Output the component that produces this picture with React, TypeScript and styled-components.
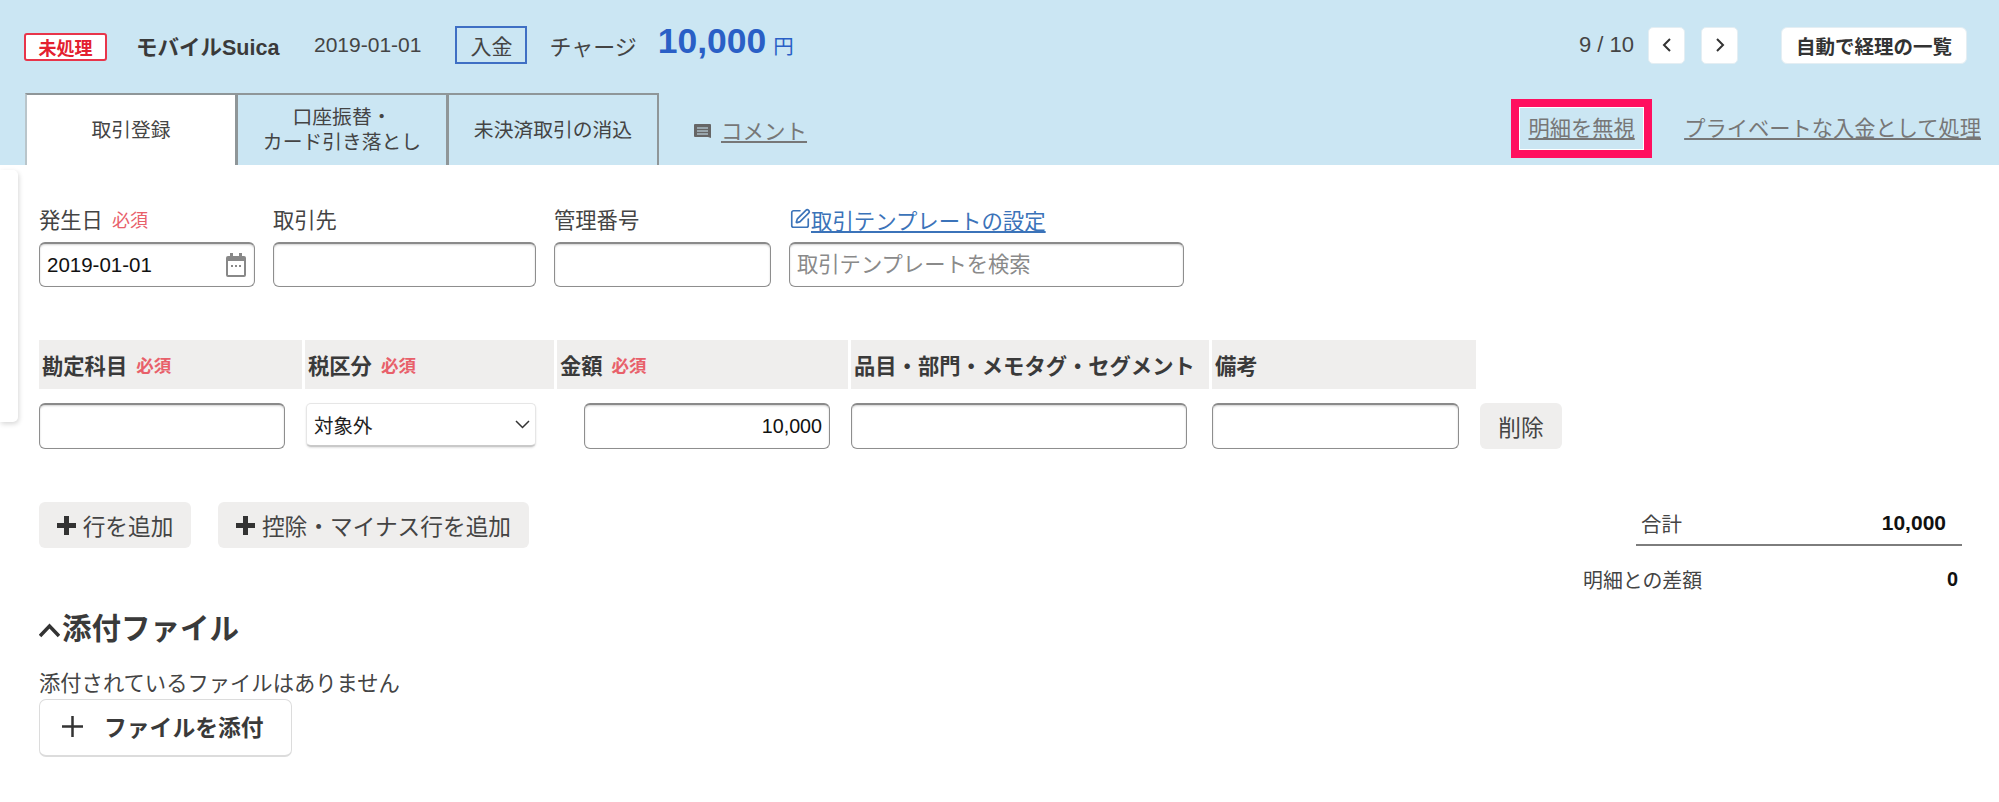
import styled, { createGlobalStyle } from "styled-components";
import { SquarePen } from "lucide-react";

const GlobalStyle = createGlobalStyle`
    html, body {
        margin: 0;
        padding: 0;
        background: #fff;
    }
    body {
        font-family: "Liberation Sans", "Noto Sans CJK JP", sans-serif;
        color: #444;
    }
    * {
        box-sizing: border-box;
    }
`;

const Page = styled.div`
    width: 1999px;
    height: 802px;
    overflow: hidden;
    position: relative;
`;

const Header = styled.header`
    height: 165px;
    background: #cbe6f3;
`;
const TopRow = styled.div`
    height: 93px;
    padding: 0 32px 3px 24px;
    display: flex;
    align-items: center;
`;
const StatusBadge = styled.span`
    width: 83px;
    height: 28px;
    margin-top: 3px;
    display: flex;
    align-items: center;
    justify-content: center;
    background: #fff;
    border: 2px solid #e8354a;
    border-radius: 3px;
    color: #e3202f;
    font-size: 18px;
    font-weight: 700;
`;
const WalletName = styled.span`
    margin-left: 29px;
    width: 142px;
    font-size: 21.5px;
    font-weight: 700;
    white-space: nowrap;
    color: #3a3a3a;
`;
const DateText = styled.span`
    margin-left: 36px;
    font-size: 21px;
    color: #444;
`;
const TypeBox = styled.span`
    margin-left: 34px;
    width: 72px;
    height: 38px;
    display: flex;
    align-items: center;
    justify-content: center;
    border: 2px solid #3f6fc4;
    font-size: 21px;
`;
const Description = styled.span`
    margin-left: 22px;
    font-size: 22px;
    white-space: nowrap;
`;
const Amount = styled.span`
    margin-left: 21px;
    margin-top: -8px;
    font-size: 35.5px;
    font-weight: 700;
    color: #2a5fc6;
    line-height: 38px;
`;
const Yen = styled.span`
    margin-left: 7px;
    font-size: 20.5px;
    color: #2a5fc6;
`;
const Pager = styled.div`
    margin-left: auto;
    display: flex;
    align-items: center;
`;
const PageCount = styled.span`
    font-size: 22px;
    margin-right: 14px;
`;
const PageButtons = styled.div`
    display: flex;
    gap: 16px;
`;
const PageButton = styled.button`
    width: 37px;
    height: 37px;
    padding: 0;
    display: flex;
    align-items: center;
    justify-content: center;
    background: #fff;
    border: 1px solid #e4eef3;
    border-radius: 5px;
`;
const ListButton = styled.button`
    margin-left: 43px;
    width: 186px;
    height: 37px;
    padding: 0;
    background: #fff;
    border: 1px solid #e4eef3;
    border-radius: 6px;
    font-family: inherit;
    font-size: 19.5px;
    font-weight: 700;
    color: #333;
`;

const TabRow = styled.div`
    height: 72px;
    padding: 0 18px 0 25px;
    display: flex;
    align-items: stretch;
`;
const Tab = styled.div<{ $active?: boolean }>`
    width: 212px;
    margin-right: -1px;
    display: flex;
    align-items: center;
    justify-content: center;
    text-align: center;
    font-size: 19.8px;
    line-height: 25px;
    border: 2px solid #8f9698;
    border-bottom: none;
    background: ${props => (props.$active ? "#fff" : "transparent")};
    border-left-color: ${props => (props.$active ? "#b9c5ca" : "#8f9698")};
`;
const CommentLink = styled.a`
    margin-left: 36px;
    margin-top: 20px;
    height: 32px;
    display: flex;
    align-items: center;
    gap: 10px;
    font-size: 21.5px;
    color: #777;
    span {
        text-decoration: underline;
    }
    svg {
        margin-top: 4px;
    }
`;
const TabActions = styled.div`
    margin-left: auto;
    display: flex;
    align-items: flex-start;
`;
const ActionLink = styled.a`
    margin-top: 18px;
    font-size: 21.25px;
    color: #777;
    text-decoration: underline;
    white-space: nowrap;
`;
const IgnoreLink = styled(ActionLink)`
    margin-top: 6px;
    margin-right: 32px;
    width: 141px;
    height: 59px;
    padding-bottom: 5px;
    display: flex;
    align-items: center;
    justify-content: center;
    border: 8px solid #ff0f5f;
    outline: 1px solid #fff;
    outline-offset: -9px;
`;

const DrawerEdge = styled.div`
    position: absolute;
    left: 0;
    top: 170px;
    width: 18px;
    height: 252px;
    background: #fff;
    border-radius: 0 5px 5px 0;
    box-shadow: 1px 2px 5px rgba(0, 0, 0, 0.16);
`;

const Body = styled.main`
    padding: 42px 37px 0 39px;
`;
const FormRow = styled.div`
    display: flex;
    gap: 18px;
`;
const Field = styled.div<{ $width: number }>`
    width: ${props => props.$width}px;
    display: flex;
    flex-direction: column;
    gap: 9px;
`;
const Label = styled.label`
    height: 26px;
    padding-bottom: 3px;
    display: flex;
    align-items: center;
    font-size: 21.3px;
    white-space: nowrap;
`;
const Required = styled.span`
    margin-left: 9px;
    font-size: 18px;
    color: #e8606a;
`;
const TemplateLink = styled.a`
    height: 26px;
    padding-bottom: 2px;
    display: flex;
    align-items: center;
    font-size: 21.4px;
    color: #3b73b9;
    text-decoration: underline;
    white-space: nowrap;
`;
const InputWrap = styled.div<{ $width?: number; $offset?: number }>`
    position: relative;
    width: ${props => (props.$width ? `${props.$width}px` : "100%")};
    margin-left: ${props => props.$offset || 0}px;
    height: 45px;
`;
const TextInput = styled.input`
    display: block;
    width: 100%;
    height: 100%;
    padding: 0 7px;
    background: #fff;
    border: 1px solid #8e8e8e;
    border-top: 2px solid #8a8a8a;
    border-radius: 6px;
    box-shadow: inset 0 1px 2px rgba(0, 0, 0, 0.18);
    font-family: inherit;
    font-size: 20.5px;
    color: #111;
    &::placeholder {
        color: #8a8a8a;
    }
`;
const SearchInput = styled(TextInput)`
    font-size: 21.3px;
`;
const AmountInput = styled(TextInput)`
    font-size: 19.7px;
    text-align: right;
`;
const CalendarIcon = styled.svg`
    position: absolute;
    right: 9px;
    top: 11px;
`;

const TableHead = styled.div`
    margin-top: 53px;
    display: grid;
    grid-template-columns: 263px 249px 291px 358px 264px;
    column-gap: 3px;
`;
const HeadCell = styled.div`
    height: 49px;
    padding: 0 0 1px 3px;
    display: flex;
    align-items: center;
    background: #efeeed;
    font-size: 21.3px;
    font-weight: 700;
    white-space: nowrap;
    color: #3a3a3a;
`;
const HeadRequired = styled(Required)`
    font-weight: 700;
    font-size: 17.5px;
`;
const TableRow = styled.div`
    margin-top: 14px;
    display: grid;
    grid-template-columns: 263px 249px 291px 358px 264px 82px;
    column-gap: 3px;
    ${InputWrap} {
        height: 46px;
    }
`;
const SelectBox = styled.div`
    width: 230px;
    height: 44px;
    margin-left: 1px;
    padding: 0 5px 0 7px;
    display: flex;
    align-items: center;
    justify-content: space-between;
    background: #fff;
    border: 1px solid #e6e6e6;
    border-bottom: 2px solid #c9c9c9;
    border-radius: 5px;
    box-shadow: 0 1px 2px rgba(0, 0, 0, 0.12);
    font-size: 19.5px;
    color: #222;
`;
const GrayButton = styled.button`
    display: flex;
    align-items: center;
    justify-content: center;
    height: 46px;
    padding: 0;
    background: #efeeed;
    border: none;
    border-radius: 6px;
    font-family: inherit;
    font-size: 22.7px;
    color: #444;
    white-space: nowrap;
`;
const DeleteButton = styled(GrayButton)`
    width: 82px;
    margin-left: 1px;
`;
const AddButton = styled(GrayButton)<{ $width: number }>`
    width: ${props => props.$width}px;
    gap: 7px;
`;
const ActionRow = styled.div`
    margin-top: 53px;
    display: flex;
    justify-content: space-between;
    align-items: flex-start;
`;
const AddButtons = styled.div`
    display: flex;
    gap: 27px;
`;
const Totals = styled.div`
    width: 379px;
    height: 93px;
    display: flex;
    flex-direction: column;
`;
const SumRow = styled.div`
    margin-left: 53px;
    height: 44px;
    padding: 0 16px 0 5px;
    display: flex;
    align-items: center;
    justify-content: space-between;
    border-bottom: 2px solid #7d7d7d;
    font-size: 20.5px;
`;
const SumValue = styled.b`
    font-size: 21px;
    color: #111;
`;
const DiffRow = styled.div`
    margin-top: 19px;
    padding-right: 4px;
    display: flex;
    align-items: center;
    justify-content: space-between;
    font-size: 19.9px;
`;
const DiffValue = styled.b`
    color: #111;
`;

const SectionTitle = styled.h2`
    margin: 11px 0 0;
    height: 40px;
    display: flex;
    align-items: center;
    gap: 2px;
    font-size: 29.5px;
    font-weight: 700;
    color: #3a3a3a;
    svg {
        margin-top: 9px;
    }
`;
const NoFileText = styled.p`
    margin: 23px 0 0;
    height: 30px;
    line-height: 31px;
    font-size: 21.3px;
`;
const AttachButton = styled.button`
    width: 253px;
    height: 58px;
    padding: 0 0 2px 22px;
    display: flex;
    align-items: center;
    gap: 21px;
    background: #fff;
    border: 1px solid #dcdcdc;
    border-bottom-width: 2px;
    border-radius: 7px;
    font-family: inherit;
    font-size: 22.8px;
    font-weight: 700;
    color: #3a3a3a;
`;

function PlusMark({ size, weight }: { size: number; weight: number }) {
    const mid = size / 2;
    return (
        <svg width={size} height={size} viewBox={`0 0 ${size} ${size}`}>
            <path d={`M${mid} 0V${size}M0 ${mid}H${size}`} stroke="#333" strokeWidth={weight} />
        </svg>
    );
}

function App() {
    return (
        <Page>
            <GlobalStyle />
            <Header>
                <TopRow>
                    <StatusBadge>未処理</StatusBadge>
                    <WalletName>モバイルSuica</WalletName>
                    <DateText>2019-01-01</DateText>
                    <TypeBox>入金</TypeBox>
                    <Description>チャージ</Description>
                    <Amount>10,000</Amount>
                    <Yen>円</Yen>
                    <Pager>
                        <PageCount>9 / 10</PageCount>
                        <PageButtons>
                            <PageButton>
                                <svg width="10" height="14" viewBox="0 0 10 14">
                                    <path d="M8 1L2 7l6 6" fill="none" stroke="#333" strokeWidth="2" />
                                </svg>
                            </PageButton>
                            <PageButton>
                                <svg width="10" height="14" viewBox="0 0 10 14">
                                    <path d="M2 1l6 6-6 6" fill="none" stroke="#333" strokeWidth="2" />
                                </svg>
                            </PageButton>
                        </PageButtons>
                        <ListButton>自動で経理の一覧</ListButton>
                    </Pager>
                </TopRow>
                <TabRow>
                    <Tab $active>取引登録</Tab>
                    <Tab>
                        口座振替・
                        <br />
                        カード引き落とし
                    </Tab>
                    <Tab>未決済取引の消込</Tab>
                    <CommentLink>
                        <svg width="17" height="15" viewBox="0 0 17 15">
                            <path
                                d="M1 0h15a1 1 0 0 1 1 1v13l-3-1H1a1 1 0 0 1-1-1V1a1 1 0 0 1 1-1z"
                                fill="#666"
                            />
                            <path d="M3 4h11M3 7h11M3 10h11" stroke="#cbe6f3" strokeWidth="1" />
                        </svg>
                        <span>コメント</span>
                    </CommentLink>
                    <TabActions>
                        <IgnoreLink>明細を無視</IgnoreLink>
                        <ActionLink>プライベートな入金として処理</ActionLink>
                    </TabActions>
                </TabRow>
            </Header>
            <DrawerEdge />
            <Body>
                <FormRow>
                    <Field $width={216}>
                        <Label>
                            発生日<Required>必須</Required>
                        </Label>
                        <InputWrap>
                            <TextInput readOnly defaultValue="2019-01-01" />
                            <CalendarIcon width="20" height="24" viewBox="0 0 20 24">
                                <path d="M4 0h3v3h6V0h3v3h2a2 2 0 0 1 2 2v17a2 2 0 0 1-2 2H2a2 2 0 0 1-2-2V5a2 2 0 0 1 2-2h2z" fill="#888" />
                                <rect x="2" y="8" width="16" height="14" fill="#fff" />
                                <path d="M5 13h2M9 13h2M13 13h2" stroke="#888" strokeWidth="2" />
                            </CalendarIcon>
                        </InputWrap>
                    </Field>
                    <Field $width={263}>
                        <Label>取引先</Label>
                        <InputWrap>
                            <TextInput readOnly />
                        </InputWrap>
                    </Field>
                    <Field $width={217}>
                        <Label>管理番号</Label>
                        <InputWrap>
                            <TextInput readOnly />
                        </InputWrap>
                    </Field>
                    <Field $width={395}>
                        <TemplateLink>
                            <SquarePen size={22} strokeWidth={1.8} />
                            取引テンプレートの設定
                        </TemplateLink>
                        <InputWrap>
                            <SearchInput readOnly placeholder="取引テンプレートを検索" />
                        </InputWrap>
                    </Field>
                </FormRow>

                <TableHead>
                    <HeadCell>
                        勘定科目<HeadRequired>必須</HeadRequired>
                    </HeadCell>
                    <HeadCell>
                        税区分<HeadRequired>必須</HeadRequired>
                    </HeadCell>
                    <HeadCell>
                        金額<HeadRequired>必須</HeadRequired>
                    </HeadCell>
                    <HeadCell>品目・部門・メモタグ・セグメント</HeadCell>
                    <HeadCell>備考</HeadCell>
                </TableHead>
                <TableRow>
                    <InputWrap $width={246}>
                        <TextInput readOnly />
                    </InputWrap>
                    <SelectBox>
                        対象外
                        <svg width="15" height="9" viewBox="0 0 15 9">
                            <path d="M1 1l6.5 6.5L14 1" fill="none" stroke="#333" strokeWidth="1.5" />
                        </svg>
                    </SelectBox>
                    <InputWrap $width={246} $offset={27}>
                        <AmountInput readOnly defaultValue="10,000" />
                    </InputWrap>
                    <InputWrap $width={336}>
                        <TextInput readOnly />
                    </InputWrap>
                    <InputWrap $width={247}>
                        <TextInput readOnly />
                    </InputWrap>
                    <DeleteButton>削除</DeleteButton>
                </TableRow>

                <ActionRow>
                    <AddButtons>
                        <AddButton $width={152}>
                            <PlusMark size={19} weight={5} />
                            行を追加
                        </AddButton>
                        <AddButton $width={311}>
                            <PlusMark size={19} weight={5} />
                            控除・マイナス行を追加
                        </AddButton>
                    </AddButtons>
                    <Totals>
                        <SumRow>
                            <span>合計</span>
                            <SumValue>10,000</SumValue>
                        </SumRow>
                        <DiffRow>
                            <span>明細との差額</span>
                            <DiffValue>0</DiffValue>
                        </DiffRow>
                    </Totals>
                </ActionRow>

                <SectionTitle>
                    <svg width="21" height="15" viewBox="0 0 21 15">
                        <path d="M1 13L10.5 3L20 13" fill="none" stroke="#333" strokeWidth="3.5" />
                    </svg>
                    添付ファイル
                </SectionTitle>
                <NoFileText>添付されているファイルはありません</NoFileText>
                <AttachButton>
                    <PlusMark size={21} weight={2.5} />
                    ファイルを添付
                </AttachButton>
            </Body>
        </Page>
    );
}

export default App;
